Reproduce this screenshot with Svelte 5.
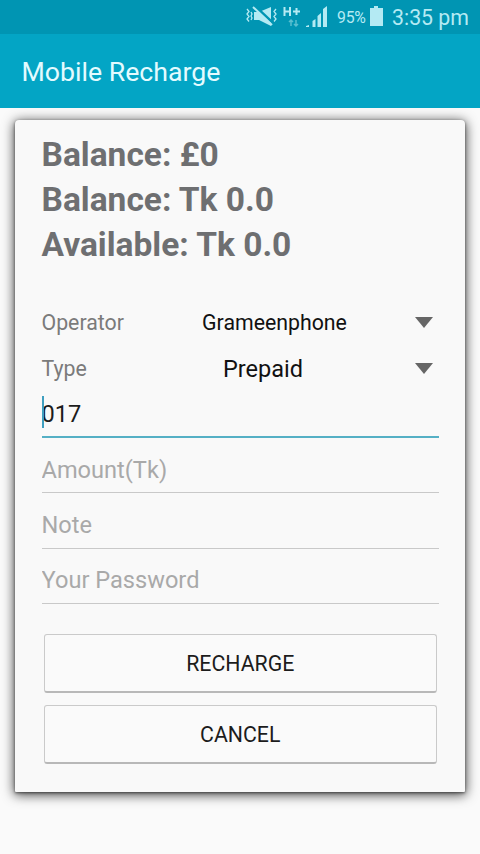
<script>
  let balances = ["Balance: £0", "Balance: Tk 0.0", "Available: Tk 0.0"];
  let operator = "Grameenphone";
  let type = "Prepaid";
  let phone = "017";
  let amount = "";
  let note = "";
  let password = "";
</script>

<style>
  :global(body) {
    background-color: #fafafa;
    font-family: Roboto, "Liberation Sans", sans-serif;
  }
  .screen {
    height: 854px;
    overflow: hidden;
    color: #1c1c1c;
  }
  .status {
    display: flex;
    align-items: center;
    box-sizing: border-box;
    height: 34px;
    background-color: #0095b3;
    color: #b4eaf3;
  }
  .status svg {
    display: block;
    flex: none;
    margin-left: 245px;
  }
  .percent {
    width: 29px;
    margin-left: 8px;
    font-size: 15.8px;
    letter-spacing: -0.2px;
  }
  .status svg.battery {
    margin-left: 3px;
  }
  .time {
    margin-left: 9px;
    font-size: 21.3px;
    white-space: nowrap;
  }
  .title-bar {
    display: flex;
    align-items: center;
    box-sizing: border-box;
    height: 74px;
    padding: 2px 21px 0 21.5px;
    background-color: #03a5c5;
    color: #e3fbff;
  }
  h1 {
    margin: 0;
    font-size: 26.7px;
    font-weight: 400;
  }
  .card {
    box-sizing: border-box;
    width: 450px;
    height: 672px;
    margin: 12px 0 0 15px;
    padding: 13px 26.5px 0 26.5px;
    border-radius: 4px 4px 1px 1px;
    background-color: #f9f9f9;
    box-shadow: 0 2px 12px 1px rgba(0, 0, 0, 0.7), 0 1px 3px rgba(0, 0, 0, 0.5);
  }
  .balances {
    height: 166px;
    color: #6e6f71;
    font-size: 33.5px;
    font-weight: 700;
    line-height: 44.8px;
  }
  .row {
    display: flex;
    align-items: center;
    height: 46.5px;
  }
  .label {
    width: 114px;
    color: #7b7b7b;
    font-size: 21.3px;
  }
  .value {
    width: 238px;
    text-align: center;
    font-size: 21.3px;
    color: #111;
  }
  .value.large {
    width: 215px;
    margin-right: 23px;
    font-size: 23.5px;
  }
  .arrow {
    margin-left: 21.5px;
    border: 9px solid transparent;
    border-top: 11px solid #666;
    border-bottom: 0;
  }
  .field {
    position: relative;
    box-sizing: border-box;
    height: 55.4px;
    padding-top: 9.5px;
    border-bottom: 1.5px solid #c9c9c9;
  }
  .field.active {
    height: 46px;
    padding-top: 1px;
    border-bottom: 2px solid #55b0c5;
  }
  .field.active::before {
    content: "";
    position: absolute;
    left: 0;
    top: 4px;
    width: 2px;
    height: 32px;
    background-color: #3f9fc0;
  }
  input {
    display: block;
    width: 100%;
    height: 44px;
    padding: 0;
    border: 0;
    outline: 0;
    background: transparent;
    color: #1c1c1c;
    font-family: inherit;
    font-size: 23.6px;
  }
  .active input {
    height: 41px;
  }
  input::placeholder {
    color: #a9a9a9;
    opacity: 1;
  }
  .buttons {
    display: flex;
    flex-direction: column;
    gap: 12px;
    padding: 30px 2px 0 2.5px;
  }
  button {
    height: 59px;
    padding: 0;
    border: 1px solid #cacaca;
    border-bottom: 2px solid #b8b8b8;
    border-radius: 3px;
    background-color: #fafafa;
    color: #1c1c1c;
    font-family: inherit;
    font-size: 21.3px;
  }
</style>

<div class="screen">
  <div class="status">
    <svg width="84" height="26" viewBox="0 0 84 26" fill="none" stroke="#b4eaf3">
      <path d="M2 5l2 2.500-2 2.500 2 2.500-2 2.500 2 2.500M6 8l1 2-1 2 1 2-1 2M31 5l-2 2.500 2 2.500-2 2.500 2 2.500-2 2.500" stroke-width="1.300" />
      <path d="M9 8h5l12-5v19l-12-6H9z" fill="#b4eaf3" stroke="none" />
      <path d="M10 2l18 17" stroke="#0095b3" stroke-width="2.500" />
      <path d="M8 3l19 18" stroke-width="2" />
      <path d="M39.500 3v9M45 3v9M39.500 7.500H45M48 7.500h7M51.500 4v7" stroke-width="2" />
      <path d="M46 22v-6M44 18l2-2 2 2M51 16v6M49 20l2 2 2-2" stroke="#58bfd0" stroke-width="1.500" />
      <path d="M61 22l3-1v2h-3zM67.500 17l3-2v8h-3zM72.500 12l3.500-3v14h-3.500zM78 5l4-3v21h-4z" fill="#b4eaf3" stroke="none" />
    </svg>
    <span class="percent">95%</span>
    <svg class="battery" width="14" height="22" viewBox="0 0 14 22">
      <path d="M5 0h4v2h5v18H1V2h4z" fill="#b4eaf3" />
    </svg>
    <span class="time">3:35 pm</span>
  </div>
  <div class="title-bar">
    <h1>Mobile Recharge</h1>
  </div>

  <div class="card">
    <div class="balances">
      {#each balances as balance}
        <div>{balance}</div>
      {/each}
    </div>
    <div class="row">
      <span class="label">Operator</span>
      <span class="value">{operator}</span>
      <span class="arrow"></span>
    </div>
    <div class="row">
      <span class="label">Type</span>
      <span class="value large">{type}</span>
      <span class="arrow"></span>
    </div>
    <div class="field active">
      <input type="text" bind:value={phone} />
    </div>
    <div class="field">
      <input type="text" placeholder="Amount(Tk)" bind:value={amount} />
    </div>
    <div class="field">
      <input type="text" placeholder="Note" bind:value={note} />
    </div>
    <div class="field">
      <input type="password" placeholder="Your Password" bind:value={password} />
    </div>
    <div class="buttons">
      <button>RECHARGE</button>
      <button>CANCEL</button>
    </div>
  </div>
</div>
